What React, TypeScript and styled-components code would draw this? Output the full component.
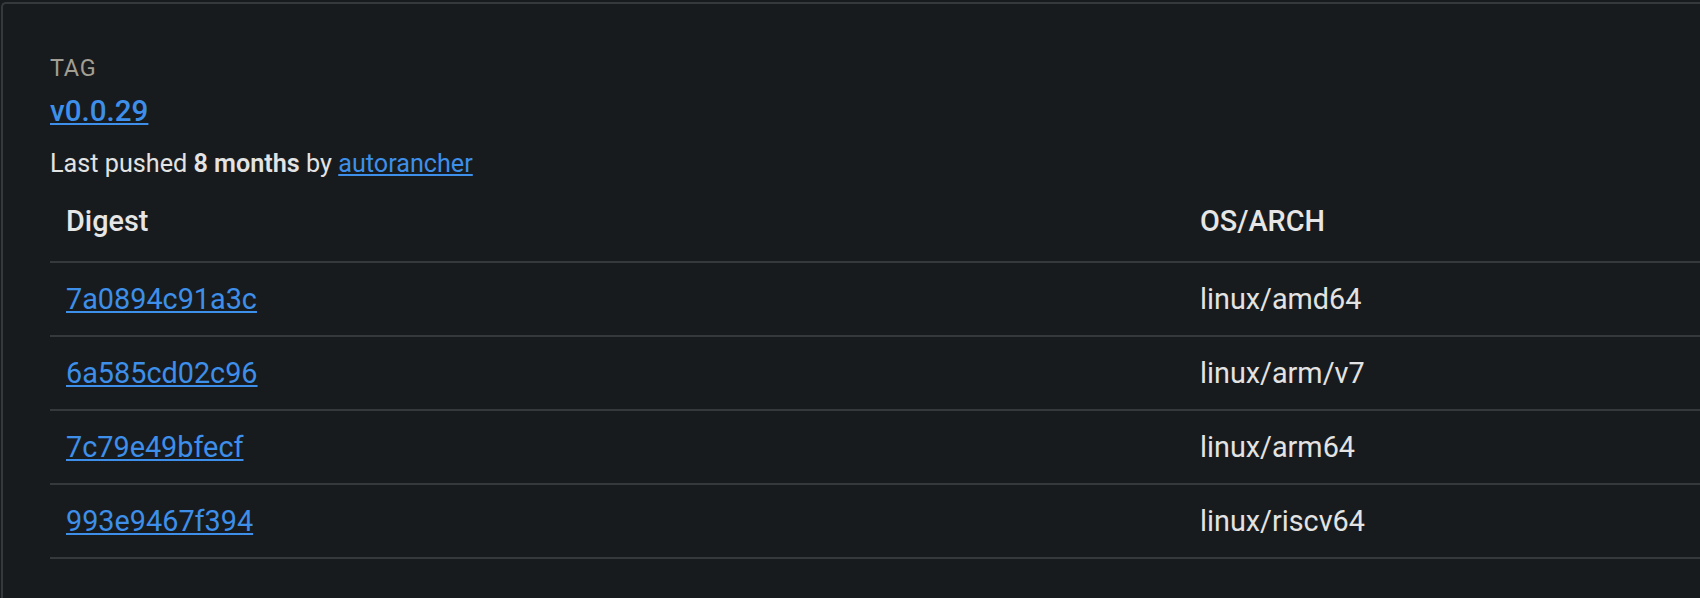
import styled, { createGlobalStyle } from 'styled-components';
import React from 'react';

const GlobalStyle = createGlobalStyle`
  html, body {
    margin: 0;
    padding: 0;
    background: #181b1d;
    overflow: hidden;
  }
  body {
    font-family: Roboto, "Noto Sans", "Liberation Sans", sans-serif;
    color: #e3e3e3;
  }
`

const Panel = styled.section`
  margin: 2px 0 0 1px;
  border: 2px solid #35393c;
  border-right: none;
  border-bottom: none;
  border-top-left-radius: 5px;
  padding: 50px 0 80px 47px;
  min-height: 600px;
  background: #181b1d;
`

const Label = styled.div`
  font-size: 23.4px;
  line-height: 28px;
  letter-spacing: 0.8px;
  color: #a39e93;
  text-transform: uppercase;
`

const Link = styled.a`
  color: #3d8fea;
  text-decoration: underline;
  text-decoration-thickness: 2px;
  text-underline-offset: 2px;
  cursor: pointer;
`

const TagName = styled.div`
  margin-top: 11px;
  font-size: 29.6px;
  line-height: 36px;
  font-weight: 500;
`

const PushedInfo = styled.div`
  margin-top: 20px;
  font-size: 25.2px;
  line-height: 30px;
  color: #e3e3e3;

  b {
    font-weight: 600;
  }

  ${Link} {
    text-decoration-thickness: 1.5px;
    text-underline-offset: 2px;
  }
`

const Table = styled.div`
  display: grid;
  grid-template-columns: 1134px 1fr;
`

const HeadCell = styled.div`
  padding: 25px 16px 23px;
  font-size: 28.8px;
  line-height: 34px;
  font-weight: 500;
  color: #e6e6e6;
  border-bottom: 2px solid #35393c;
`

const Cell = styled.div`
  padding: 19px 16px;
  font-size: 28.8px;
  line-height: 34px;
  color: #e3e3e3;
  border-bottom: 2px solid #35393c;

  ${Link} {
    text-decoration-thickness: 1.5px;
    text-underline-offset: 2px;
  }
`

const images = [
  { digest: '7a0894c91a3c', arch: 'linux/amd64' },
  { digest: '6a585cd02c96', arch: 'linux/arm/v7' },
  { digest: '7c79e49bfecf', arch: 'linux/arm64' },
  { digest: '993e9467f394', arch: 'linux/riscv64' },
];

function App() {
  return (
    <>
      <GlobalStyle />
      <Panel>
        <Label>Tag</Label>
        <TagName>
          <Link>v0.0.29</Link>
        </TagName>
        <PushedInfo>
          Last pushed <b>8 months</b> by <Link>autorancher</Link>
        </PushedInfo>
        <Table>
          <HeadCell>Digest</HeadCell>
          <HeadCell>OS/ARCH</HeadCell>
          {images.map((img) => (
            <React.Fragment key={img.digest}>
              <Cell>
                <Link>{img.digest}</Link>
              </Cell>
              <Cell>{img.arch}</Cell>
            </React.Fragment>
          ))}
        </Table>
      </Panel>
    </>
  );
}

export default App;
